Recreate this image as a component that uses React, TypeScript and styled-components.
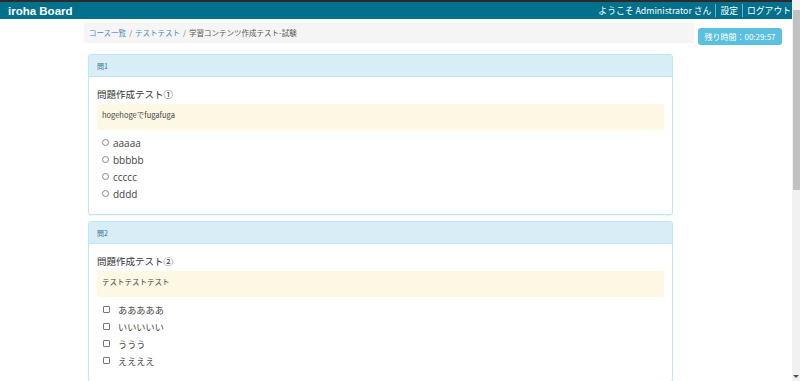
import React from "react";
import styled, { createGlobalStyle } from "styled-components";

const Global = createGlobalStyle`
  body {
    margin: 0;
    font-family: "Noto Sans CJK JP", "Open Sans", sans-serif;
    color: #333;
    background: #fff;
  }
`;

const Page = styled.div`
  margin-right: 8px;
`;

const ScrollTrack = styled.div`
  position: fixed;
  top: 0;
  right: 0;
  width: 8px;
  height: 100vh;
  background: #f1f1f1;
  display: flex;
  flex-direction: column;
  align-items: center;
`;

const ScrollThumb = styled.div`
  margin-top: 10px;
  width: 7px;
  height: 180px;
  background: #c1c1c1;
`;

const ScrollArrow = styled.div`
  margin-top: auto;
  margin-bottom: 3px;
  width: 0;
  height: 0;
  border-left: 3px solid transparent;
  border-right: 3px solid transparent;
  border-top: 3px solid #505050;
`;

const Header = styled.header`
  height: 17px;
  border-top: 2px solid #2b2b2b;
  background: #00708c;
  display: flex;
  align-items: center;
  justify-content: space-between;
  padding: 0 0 0 8px;
  color: #fff;
`;

const Brand = styled.div`
  font-family: "Liberation Sans", Arial, sans-serif;
  font-weight: bold;
  font-size: 11.5px;
`;

const Nav = styled.nav`
  display: flex;
  align-items: center;
  font-size: 8.8px;
`;

const NavItem = styled.span<{ $sep?: boolean }>`
  padding: 0 4px;
  line-height: 13px;
  border-left: ${(p) => (p.$sep ? "1px solid rgba(255,255,255,0.45)" : "none")};
  &:last-child { padding-right: 1px; }
`;

const TopRow = styled.div`
  display: flex;
  align-items: flex-start;
  margin-top: 3px;
  padding-left: 84px;
`;

const Breadcrumb = styled.div`
  width: 605px;
  height: 21px;
  background: #f5f5f5;
  border-radius: 2px;
  display: flex;
  align-items: center;
  padding-left: 5px;
  font-size: 7.5px;
  color: #555;
`;

const Crumb = styled.span`
  color: #4a86c0;
`;

const Sep = styled.span`
  color: #777;
  padding: 0 3px;
`;

const Timer = styled.div`
  margin-left: 4px;
  margin-top: 6px;
  width: 84px;
  height: 17px;
  background: #5bc0de;
  color: #fff;
  border-radius: 3px;
  font-size: 8px;
  display: flex;
  align-items: center;
  justify-content: center;
`;

const Questions = styled.div`
  margin-left: 88px;
  width: 585px;
  margin-top: 9px;
  display: flex;
  flex-direction: column;
  gap: 6px;
`;

const Panel = styled.section`
  border: 1px solid #bce8f1;
  border-radius: 3px;
  background: #fff;
  box-shadow: 0 1px 1px rgba(0,0,0,0.05);
`;

const PanelHeading = styled.div`
  height: 21px;
  background: #d9edf7;
  color: #31708f;
  font-size: 7px;
  display: flex;
  align-items: center;
  padding-left: 8px;
  border-bottom: 1px solid #bce8f1;
`;

const PanelBody = styled.div`
  padding: 9px 8px 12px 8px;
`;

const Title = styled.div`
  font-size: 9.5px;
  line-height: 16px;
  color: #333;
  margin-bottom: 2px;
`;

const Body = styled.div`
  background: #fcf8e3;
  border-radius: 3px;
  height: 26px;
  padding: 5px 5px 0;
  box-sizing: border-box;
  font-size: 7.5px;
  line-height: 11px;
  color: #444;
  margin-bottom: 4px;
`;

const Options = styled.ul`
  list-style: none;
  margin: 0;
  padding: 0 0 0 5px;
`;

const Option = styled.li`
  display: flex;
  align-items: center;
  height: 17px;
  color: #444;
`;

const Radio = styled.span`
  width: 5px;
  height: 5px;
  border: 1px solid #888;
  border-radius: 50%;
  margin-right: 4px;
`;

const Check = styled.span`
  width: 5px;
  height: 5px;
  border: 1px solid #777;
  border-radius: 1px;
  margin: 0 8px 0 1px;
`;

const OptionText = styled.span<{ $latin?: boolean }>`
  font-family: ${(p) =>
    p.$latin ? '"Open Sans", "Noto Sans", sans-serif' : '"Noto Sans CJK JP", sans-serif'};
  font-size: ${(p) => (p.$latin ? "10px" : "9.2px")};
`;

type Q = { no: string; title: string; body: string; type: "radio" | "check"; opts: string[] };

const questions: Q[] = [
  { no: "問1", title: "問題作成テスト①", body: "hogehogeでfugafuga", type: "radio", opts: ["aaaaa", "bbbbb", "ccccc", "dddd"] },
  { no: "問2", title: "問題作成テスト②", body: "テストテストテスト", type: "check", opts: ["あああああ", "いいいいい", "ううう", "ええええ"] },
];

export default function App() {
  return (
    <>
      <Global />
      <Page>
        <Header>
          <Brand>iroha Board</Brand>
          <Nav>
            <NavItem>ようこそ Administrator さん</NavItem>
            <NavItem $sep>設定</NavItem>
            <NavItem $sep>ログアウト</NavItem>
          </Nav>
        </Header>
        <TopRow>
          <Breadcrumb>
            <Crumb>コース一覧</Crumb>
            <Sep>/</Sep>
            <Crumb>テストテスト</Crumb>
            <Sep>/</Sep>
            <span>学習コンテンツ作成テスト-試験</span>
          </Breadcrumb>
          <Timer>残り時間：00:29:57</Timer>
        </TopRow>
        <Questions>
          {questions.map((q) => (
            <Panel key={q.no}>
              <PanelHeading>{q.no}</PanelHeading>
              <PanelBody>
                <Title>{q.title}</Title>
                <Body>{q.body}</Body>
                <Options>
                  {q.opts.map((o) => (
                    <Option key={o}>
                      {q.type === "radio" ? <Radio /> : <Check />}
                      <OptionText $latin={q.type === "radio"}>{o}</OptionText>
                    </Option>
                  ))}
                </Options>
              </PanelBody>
            </Panel>
          ))}
        </Questions>
      </Page>
      <ScrollTrack>
        <ScrollThumb />
        <ScrollArrow />
      </ScrollTrack>
    </>
  );
}
